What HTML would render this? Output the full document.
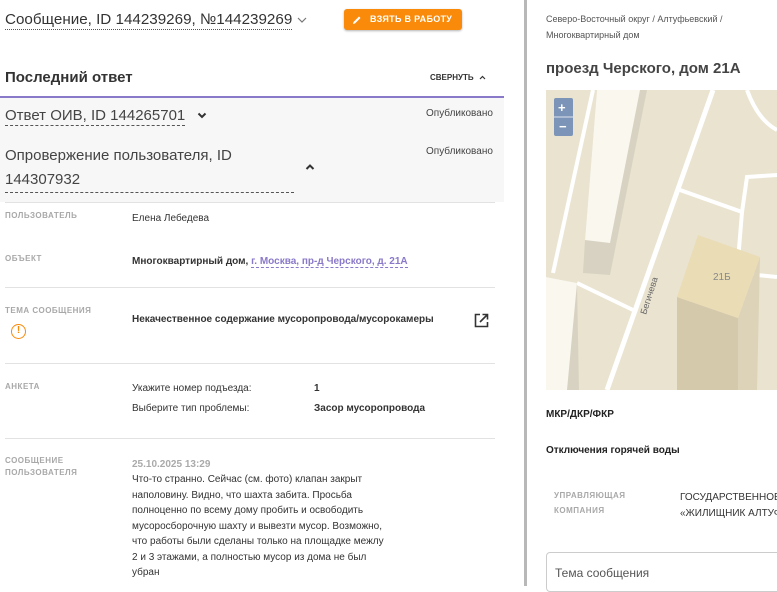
<!DOCTYPE html>
<html><head><meta charset="utf-8"><style>
*{margin:0;padding:0;box-sizing:border-box}
body{width:777px;height:586px;overflow:hidden;background:#fff;font-family:"Liberation Sans","DejaVu Sans",sans-serif;color:#333;position:relative}
.a{position:absolute;white-space:nowrap}
.lbl{font-size:8px;font-weight:bold;color:#a8a8a8;letter-spacing:.5px;line-height:16px}
.v{font-size:10px;color:#333}
.hr{position:absolute;left:5px;width:490px;height:1px;background:#e2e2e2}
</style></head><body>
<div class="a" style="left:5px;top:10px;font-size:15.2px;color:#333;border-bottom:1px dotted #555;line-height:19px">Сообщение, ID 144239269, №144239269</div>
<svg class="a" style="left:297px;top:17px" width="10" height="6" viewBox="0 0 10 6"><path d="M1 1L5 5L9 1" fill="none" stroke="#777" stroke-width="1.2"/></svg>
<div class="a" style="left:344px;top:9px;width:118px;height:21px;background:#f98a0a;border-radius:3px;box-shadow:0 1px 2px rgba(0,0,0,.3);color:#fff;font-size:9px;font-weight:bold;line-height:21px;padding-left:26px;letter-spacing:.3px">ВЗЯТЬ В РАБОТУ</div>
<svg class="a" style="left:352px;top:15px" width="10" height="10" viewBox="0 0 10 10"><path d="M1 9 L1.5 7 L7 1.5 L8.5 3 L3 8.5 Z" fill="#fff"/></svg>
<div class="a" style="left:5px;top:69px;font-size:15px;font-weight:bold;color:#333">Последний ответ</div>
<div class="a" style="left:430px;top:73px;font-size:8px;font-weight:bold;color:#333">СВЕРНУТЬ</div>
<svg class="a" style="left:479px;top:75px" width="7" height="5" viewBox="0 0 7 5"><path d="M1 4L3.5 1.5L6 4" fill="none" stroke="#333" stroke-width="1.2"/></svg>
<div class="a" style="left:0;top:96px;width:504px;height:2px;background:#8a78c8"></div>
<div class="a" style="left:0;top:98px;width:504px;height:104px;background:#f7f7f7"></div>
<div class="a" style="left:5px;top:106px;font-size:15px;color:#444;border-bottom:1px dashed #555;line-height:19px">Ответ ОИВ, ID 144265701</div>
<svg class="a" style="left:197px;top:112px" width="10" height="7" viewBox="0 0 10 7"><path d="M1.5 1.5L5 5L8.5 1.5" fill="none" stroke="#333" stroke-width="2"/></svg>
<div class="a" style="left:426px;top:108px;font-size:10px;color:#444">Опубликовано</div>
<div class="a" style="left:5px;top:144px;font-size:15px;color:#444;line-height:24px;width:290px;white-space:normal">Опровержение пользователя, ID<br><span style="border-bottom:1px dashed #555;display:inline-block;width:289px">144307932</span></div>
<svg class="a" style="left:305px;top:164px" width="10" height="7" viewBox="0 0 10 7"><path d="M1.5 5L5 1.5L8.5 5" fill="none" stroke="#333" stroke-width="2"/></svg>
<div class="a" style="left:426px;top:146px;font-size:10px;color:#444">Опубликовано</div>
<div class="hr" style="top:202px"></div>
<div class="a lbl" style="left:5px;top:208px">ПОЛЬЗОВАТЕЛЬ</div>
<div class="a v" style="left:132px;top:213px">Елена Лебедева</div>
<div class="a lbl" style="left:5px;top:251px">ОБЪЕКТ</div>
<div class="a v" style="left:132px;top:256px;font-weight:bold">Многоквартирный дом, <span style="color:#8a78c8;border-bottom:1px dashed #8a78c8">г. Москва, пр-д Черского, д. 21А</span></div>
<div class="hr" style="top:287px"></div>
<div class="a lbl" style="left:5px;top:303px">ТЕМА СООБЩЕНИЯ</div>
<div class="a" style="left:11px;top:324px;width:15px;height:15px;border:1.5px solid #f98a0a;border-radius:50%;color:#f98a0a;font-size:10px;font-weight:bold;text-align:center;line-height:12px">!</div>
<div class="a v" style="left:132px;top:314px;font-weight:bold">Некачественное содержание мусоропровода/мусорокамеры</div>
<svg class="a" style="left:474px;top:313px" width="15" height="15" viewBox="0 0 15 15"><path d="M6 1.5H1.5V13.5H13.5V9" fill="none" stroke="#333" stroke-width="1.6"/><path d="M8.5 1.5H13.5V6.5M13.5 1.5L6 9" fill="none" stroke="#333" stroke-width="1.6"/></svg>
<div class="hr" style="top:363px"></div>
<div class="a lbl" style="left:5px;top:379px">АНКЕТА</div>
<div class="a v" style="left:132px;top:383px">Укажите номер подъезда:</div>
<div class="a v" style="left:314px;top:383px;font-weight:bold">1</div>
<div class="a v" style="left:132px;top:403px">Выберите тип проблемы:</div>
<div class="a v" style="left:314px;top:403px;font-weight:bold">Засор мусоропровода</div>
<div class="hr" style="top:438px"></div>
<div class="a lbl" style="left:5px;top:455px;line-height:12px">СООБЩЕНИЕ<br>ПОЛЬЗОВАТЕЛЯ</div>
<div class="a" style="left:132px;top:459px;font-size:10px;font-weight:bold;color:#aaa">25.10.2025 13:29</div>
<div class="a v" style="left:132px;top:472px;line-height:15.5px;white-space:normal;width:270px">Что-то странно. Сейчас (см. фото) клапан закрыт<br>наполовину. Видно, что шахта забита. Просьба<br>полноценно по всему дому пробить и освободить<br>мусоросборочную шахту и вывезти мусор. Возможно,<br>что работы были сделаны только на площадке межлу<br>2 и 3 этажами, а полностью мусор из дома не был<br>убран</div>
<div class="a" style="left:524px;top:0;width:3px;height:586px;background:#b8b8b8"></div>
<div class="a" style="left:546px;top:11px;font-size:9px;color:#555;line-height:16px">Северо-Восточный округ / Алтуфьевский /<br>Многоквартирный дом</div>
<div class="a" style="left:546px;top:60px;font-size:15px;font-weight:bold;color:#444">проезд Черского, дом 21А</div>
<svg class="a" style="left:546px;top:90px" width="231" height="300" viewBox="0 0 231 300">
<rect width="231" height="300" fill="#e9e3d0"/>
<g stroke="#fff" fill="none">
<path d="M47 0 L7 183" stroke-width="4"/>
<path d="M167 0 L61 300" stroke-width="5"/>
<path d="M201 0 Q212 30 231 40" stroke-width="4"/>
<path d="M134 100 L196 122 L191 183 L231 187" stroke-width="4"/>
<path d="M196 122 L201 87 L231 85" stroke-width="4"/>
<path d="M31 193 L87 220" stroke-width="4"/>
</g>
<polygon points="51,0 101,0 64,185 37,183 39,150" fill="#d8d2c2"/>
<polygon points="51,0 94,0 64,153 39,150" fill="#f9f7ee"/>
<polygon points="0,187 31,193 33,300 0,300" fill="#d8d2c2"/>
<polygon points="0,187 31,193 21,300 0,300" fill="#f9f7ee"/>
<polygon points="131,207 192,228 192,300 131,300" fill="#d4c9ab"/>
<polygon points="192,228 214,167 211,300 192,300" fill="#ddd3b8"/>
<polygon points="152,145 214,167 192,228 131,207" fill="#eadcb5"/>
<text x="167" y="190" font-size="10" fill="#888" font-family="Liberation Sans">21Б</text>
<text x="100" y="225" font-size="9" fill="#666" font-family="Liberation Sans" transform="rotate(-72 100 225)">Бегичева</text>
<rect x="8" y="8" width="19" height="38" rx="2" fill="#7b94b7"/>
<line x1="8" y1="27" x2="27" y2="27" stroke="#dfe5ee" stroke-width="1"/>
<text x="12" y="22" font-size="13" fill="#fff" font-weight="bold" font-family="Liberation Sans">+</text>
<text x="13" y="41" font-size="13" fill="#fff" font-weight="bold" font-family="Liberation Sans">−</text>
</svg>
<div class="a" style="left:546px;top:409px;font-size:10px;font-weight:bold;color:#222">МКР/ДКР/ФКР</div>
<div class="a" style="left:546px;top:445px;font-size:10px;font-weight:bold;color:#222">Отключения горячей воды</div>
<div class="a lbl" style="left:554px;top:488px;line-height:15px">УПРАВЛЯЮЩАЯ<br>КОМПАНИЯ</div>
<div class="a" style="left:680px;top:490px;font-size:10px;color:#333;line-height:16px">ГОСУДАРСТВЕННОЕ<br>«ЖИЛИЩНИК АЛТУФ</div>
<div class="a" style="left:546px;top:552px;width:240px;height:40px;border:1px solid #ccc;border-radius:4px"></div>
<div class="a" style="left:555px;top:566px;font-size:12px;color:#555">Тема сообщения</div>
</body></html>
